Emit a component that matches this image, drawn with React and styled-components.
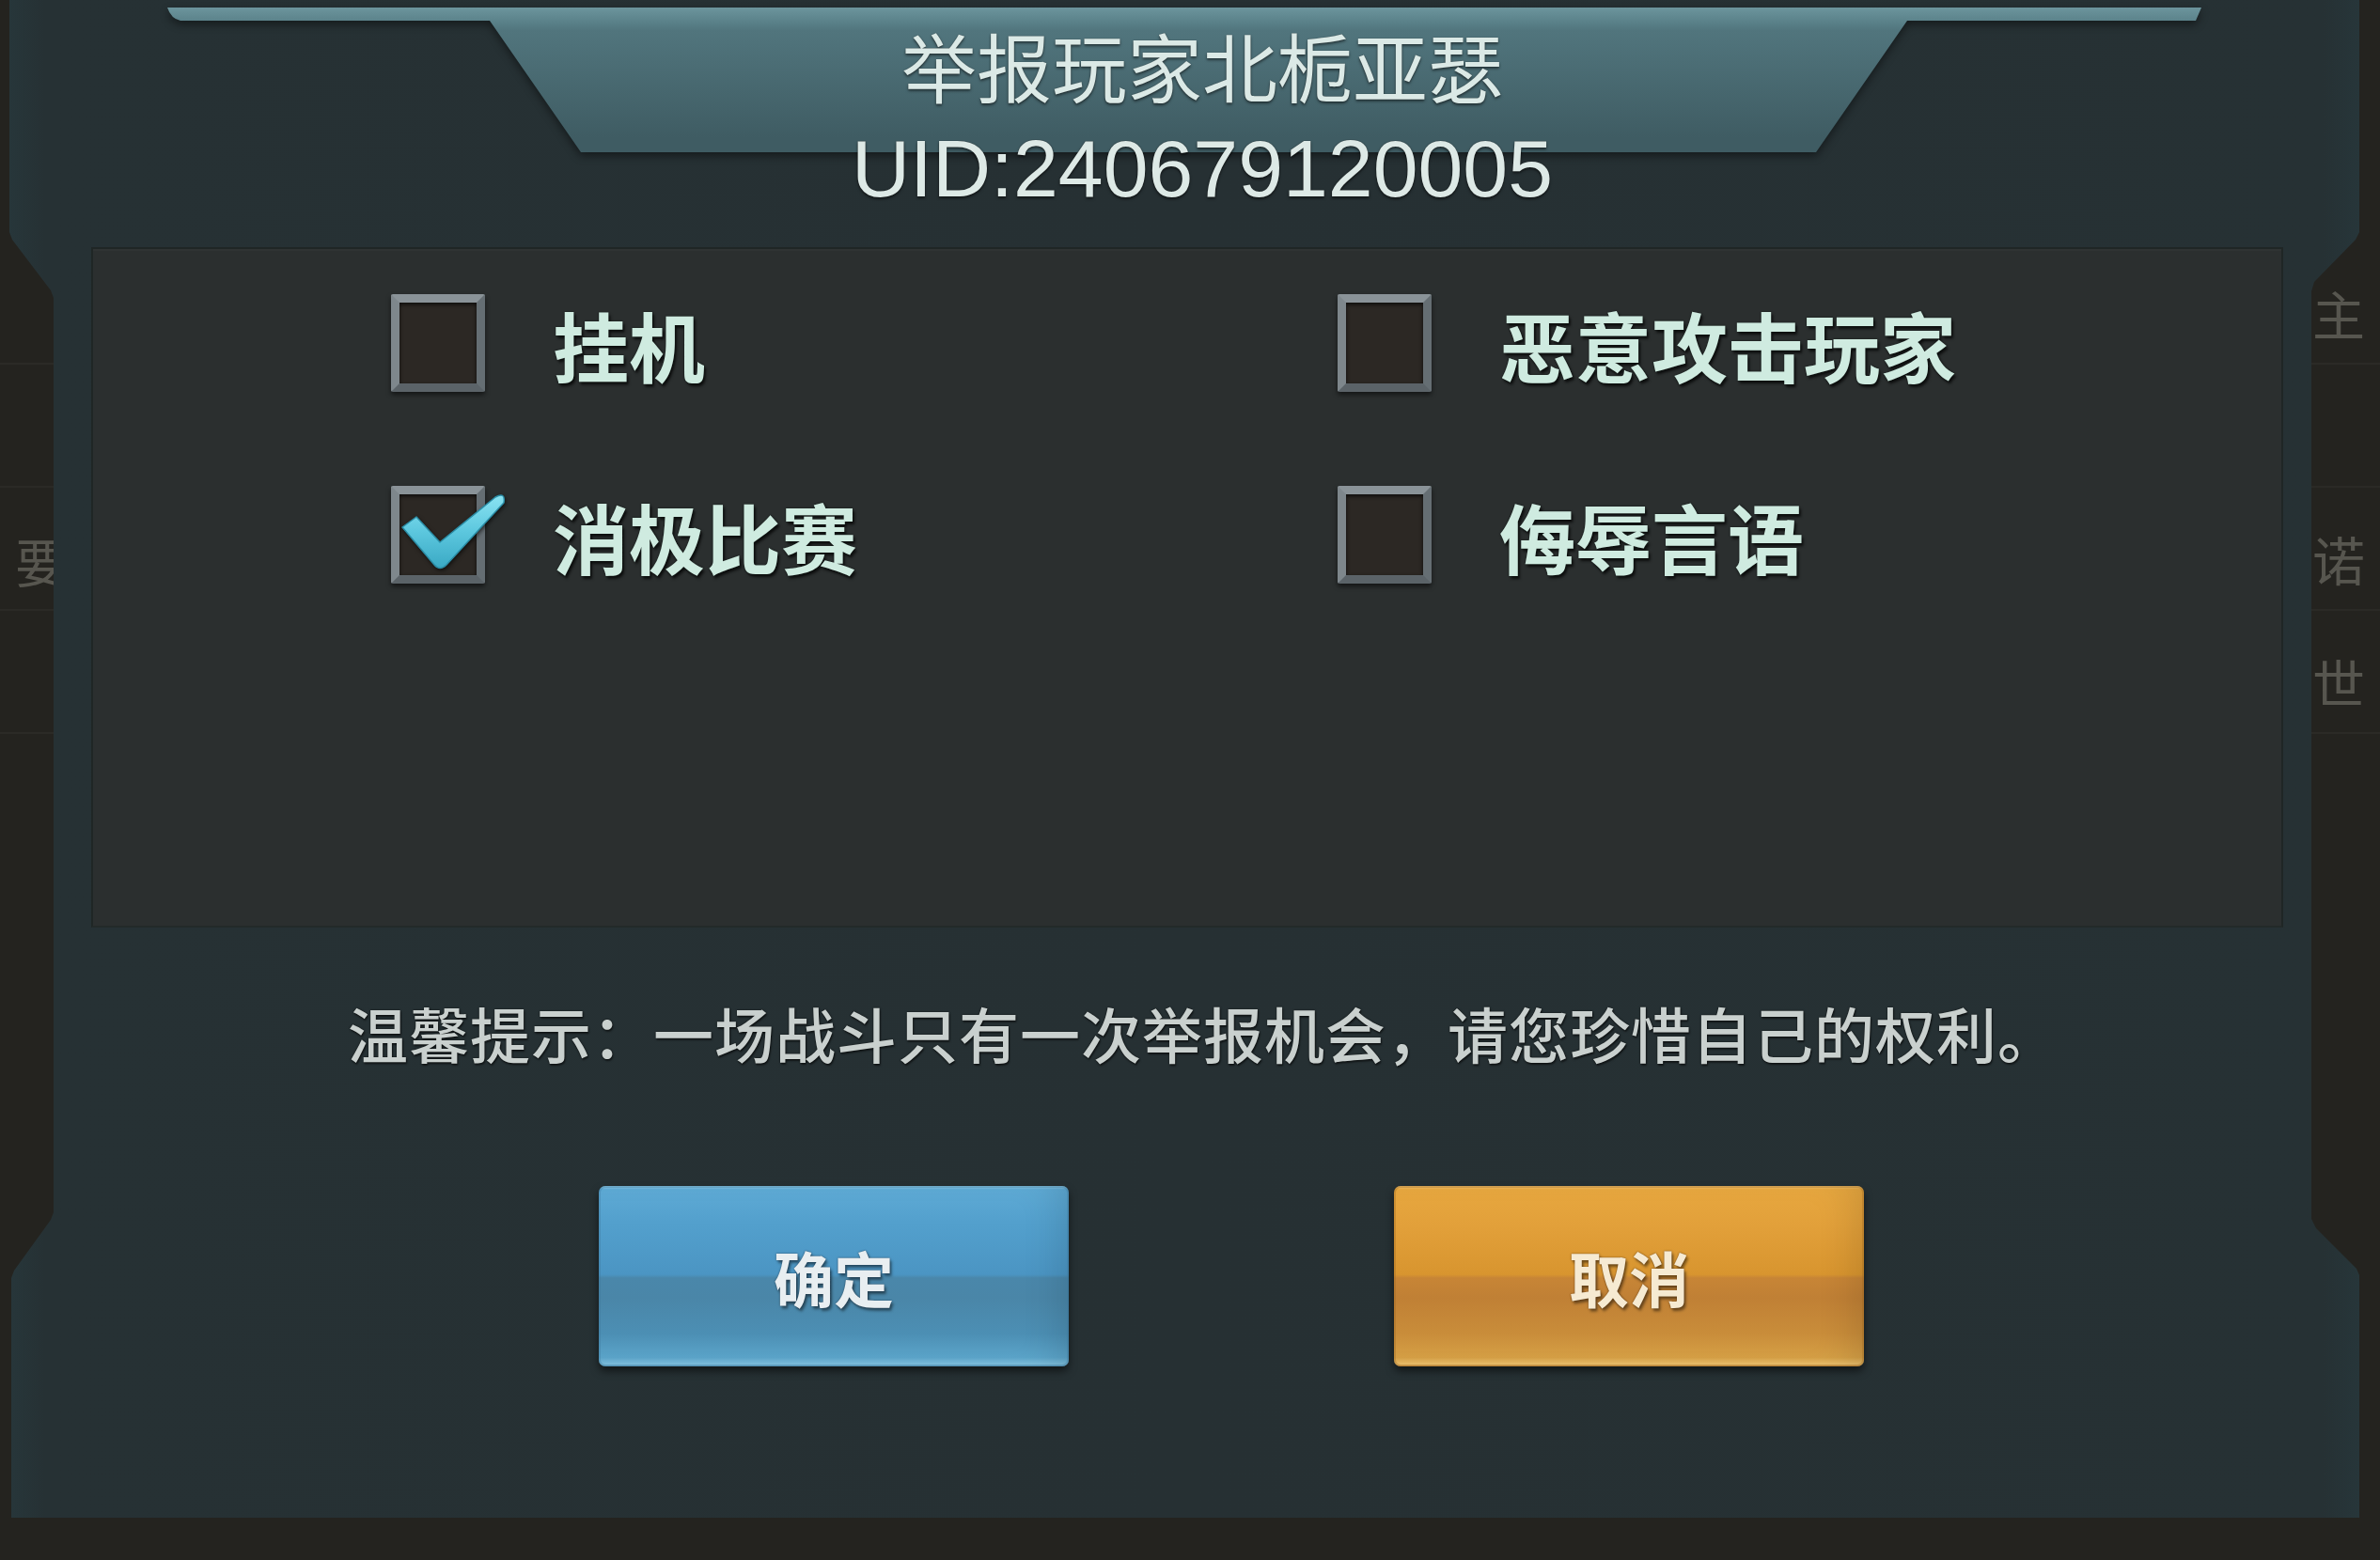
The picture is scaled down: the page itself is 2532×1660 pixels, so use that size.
import React from "react";
import styled, { createGlobalStyle } from "styled-components";

const GlobalStyle = createGlobalStyle`
  html, body { margin: 0; padding: 0; background: #24231f; overflow: hidden; }
  #root { width: 2532px; height: 1660px; }
`;

const CJK = `"Noto Sans CJK SC", "Noto Sans", sans-serif`;

const Page = styled.div`
  position: relative;
  width: 2532px;
  height: 1660px;
  box-sizing: border-box;
  padding: 0 22px 0 10px;
  background: #24231f;
  overflow: hidden;
  display: flex;
  flex-direction: column;
`;

/* background scene behind the dialog */
const Backdrop = styled.div`
  position: absolute;
  inset: 0;
  z-index: 0;
  display: flex;
  flex-direction: column;
  padding-top: 257px;
`;

const BackdropRow = styled.div`
  height: 129px;
  border-bottom: 2px solid rgba(255, 255, 255, 0.035);
`;

const SideColumn = styled.div`
  position: absolute;
  top: 0;
  ${(p) => (p.$side === "left" ? "left: 16px;" : "right: 16px;")}
  display: flex;
  flex-direction: column;
  padding-top: ${(p) => p.$top}px;
`;

const Ghost = styled.span`
  font-family: ${CJK};
  font-size: 56px;
  line-height: 56px;
  color: #57564f;
  margin-top: ${(p) => p.$mt || 0}px;
`;

const Panel = styled.div`
  position: relative;
  z-index: 1;
  width: 2500px;
  height: 1615px;
  flex: none;
  display: flex;
  flex-direction: column;
  background: linear-gradient(
    90deg,
    #27363a 0%,
    #263134 1.5%,
    #263033 50%,
    #263134 98.5%,
    #27363a 100%
  );
  clip-path: polygon(
    0 0,
    2500px 0,
    2500px 247px,
    2496px 255px,
    2452px 300px,
    2449px 310px,
    2449px 1297px,
    2454px 1307px,
    2497px 1350px,
    2500px 1357px,
    2500px 1615px,
    2px 1615px,
    2px 1360px,
    5px 1352px,
    44px 1298px,
    47px 1290px,
    47px 317px,
    44px 309px,
    3px 255px,
    0 247px
  );
`;

const Header = styled.div`
  position: relative;
  height: 263px;
  flex: none;
  box-sizing: border-box;
  padding: 28px 0 0 38px;
  display: flex;
  flex-direction: column;
  align-items: center;
`;

const BannerArt = styled.svg`
  position: absolute;
  top: 0;
  left: 0;
  width: 2500px;
  height: 180px;
  z-index: 0;
  filter: drop-shadow(0 4px 5px rgba(0, 0, 0, 0.45));
`;

const Title = styled.div`
  position: relative;
  z-index: 1;
  font-family: ${CJK};
  font-size: 80px;
  line-height: 80px;
  font-weight: 400;
  color: #dbe9e6;
  text-shadow: 0 2px 3px rgba(0, 0, 0, 0.5), 0 0 1px rgba(0, 0, 0, 0.6);
  white-space: nowrap;
`;

const Uid = styled.div`
  position: relative;
  z-index: 1;
  margin-top: 28px;
  font-family: "Liberation Sans", Arial, sans-serif;
  font-size: 86px;
  line-height: 86px;
  color: #dde9e6;
  text-shadow: 0 2px 3px rgba(0, 0, 0, 0.55), 0 0 1px rgba(0, 0, 0, 0.8);
  white-space: nowrap;
`;

const OptionsBox = styled.div`
  margin-left: 87px;
  width: 2332px;
  height: 724px;
  flex: none;
  box-sizing: border-box;
  padding: 48px 0 0 317px;
  background: #2b2f2f;
  border: 2px solid #1f2625;
  border-bottom-color: #232a29;
  box-shadow: inset 0 2px 0 rgba(255, 255, 255, 0.02);
`;

const OptionGrid = styled.div`
  display: grid;
  grid-template-columns: 1007px auto;
  row-gap: 100px;
`;

const Option = styled.label`
  display: flex;
  align-items: center;
  gap: 72px;
  height: 104px;
`;

const Box = styled.span`
  position: relative;
  flex: none;
  width: 100px;
  height: 104px;
  box-sizing: border-box;
  border: 9px solid #737c81;
  border-top-color: #8a9398;
  border-left-color: #7e878c;
  border-right-color: #656e73;
  border-bottom-color: #5b6368;
  border-radius: 2px;
  background: #2c2824;
  box-shadow: 0 3px 5px rgba(0, 0, 0, 0.55), inset 0 2px 4px rgba(0, 0, 0, 0.7);
`;

const Check = styled.svg`
  position: absolute;
  left: -9px;
  top: -9px;
  width: 130px;
  height: 100px;
  overflow: visible;
  filter: drop-shadow(1px 2px 2px rgba(0, 0, 0, 0.6));
`;

const Label = styled.span`
  font-family: ${CJK};
  font-size: 81px;
  line-height: 81px;
  font-weight: 700;
  color: #cfebe0;
  text-shadow: 0 0 2px #0d1412, 2px 3px 3px rgba(0, 0, 0, 0.7);
  white-space: nowrap;
`;

const Hint = styled.div`
  margin-top: 78px;
  padding-left: 40px;
  display: flex;
  justify-content: center;
  font-family: ${CJK};
  font-size: 64px;
  line-height: 66px;
  letter-spacing: 1px;
  font-weight: 500;
  color: #c9d0ce;
  text-shadow: 0 0 2px rgba(0, 0, 0, 0.7), 1px 2px 2px rgba(0, 0, 0, 0.5);
  white-space: nowrap;
`;

const ButtonRow = styled.div`
  margin-top: 131px;
  padding-left: 100px;
  display: flex;
  justify-content: center;
  gap: 346px;
`;

const palettes = {
  confirm: {
    bg: `linear-gradient(180deg,
      #93cfea 0%, #5eaad5 2%, #53a0cd 20%, #4b95c3 49%,
      #4a87aa 51%, #4a86a8 62%, #4c8fb4 82%, #5ba4c9 95%, #7fc0de 99%, #5c9fc2 100%)`,
    edge: "#3a7396",
    text: "#e8eef1",
    shadow: "rgba(20, 40, 60, 0.8)",
  },
  cancel: {
    bg: `linear-gradient(180deg,
      #f3c774 0%, #e7a73f 2%, #e2a03a 22%, #d8952f 49%,
      #c78536 51%, #c08035 62%, #c98d3a 82%, #d59f45 95%, #ecc06c 99%, #c88d3c 100%)`,
    edge: "#9a621f",
    text: "#f6ead2",
    shadow: "rgba(80, 45, 10, 0.85)",
  },
};

const ActionButton = styled.button`
  width: 500px;
  height: 192px;
  flex: none;
  border: none;
  border-radius: 7px;
  padding: 0;
  background: ${(p) => palettes[p.$variant].bg};
  box-shadow: 0 5px 9px rgba(0, 0, 0, 0.55), inset 0 0 0 2px ${(p) => palettes[p.$variant].edge}55,
    inset -30px 0 40px -20px rgba(0, 0, 0, 0.12);
  font-family: ${CJK};
  font-size: 64px;
  line-height: 64px;
  font-weight: 700;
  color: ${(p) => palettes[p.$variant].text};
  text-shadow: 0 0 2px ${(p) => palettes[p.$variant].shadow}, 2px 3px 3px rgba(0, 0, 0, 0.45);
  cursor: pointer;
`;

const options = [
  { label: "挂机", checked: false },
  { label: "恶意攻击玩家", checked: false },
  { label: "消极比赛", checked: true },
  { label: "侮辱言语", checked: false },
];

function CheckMark() {
  return (
    <Check viewBox="0 0 130 100">
      <defs>
        <linearGradient id="chk" x1="0" y1="0" x2="0" y2="1">
          <stop offset="0" stopColor="#8ae3f2" />
          <stop offset="0.5" stopColor="#5cc7de" />
          <stop offset="1" stopColor="#3aa9c4" />
        </linearGradient>
      </defs>
      <path
        d="M12 44 L27 33 L52 60 L111 12 Q122 6 120 18 L59 84 Q52 91 46 84 Z"
        fill="url(#chk)"
        stroke="#2b8da6"
        strokeWidth="1.5"
        strokeLinejoin="round"
      />
    </Check>
  );
}

export default function App() {
  return (
    <>
      <GlobalStyle />
      <Page>
        <Backdrop>
          {[0, 1, 2, 3].map((i) => (
            <BackdropRow key={i} />
          ))}
          <SideColumn $side="left" $top={568}>
            <Ghost>要</Ghost>
          </SideColumn>
          <SideColumn $side="right" $top={305}>
            <Ghost>主</Ghost>
            <Ghost $mt={205}>诺</Ghost>
            <Ghost $mt={75}>世</Ghost>
          </SideColumn>
        </Backdrop>
        <Panel>
          <Header>
            <BannerArt viewBox="0 0 2500 180" preserveAspectRatio="none">
              <defs>
                <linearGradient id="banner" x1="0" y1="0" x2="0" y2="1">
                  <stop offset="0" stopColor="#6c959d" />
                  <stop offset="0.1" stopColor="#5a8189" />
                  <stop offset="0.16" stopColor="#51757d" />
                  <stop offset="0.9" stopColor="#3f5c63" />
                </linearGradient>
              </defs>
              <path
                d="M168 8 L2332 8 L2326 22 L2019 22 L1922 162 L608 162 L511 22 L182 22 Q172 20 168 8 Z"
                fill="url(#banner)"
              />
            </BannerArt>
            <Title>举报玩家北栀亚瑟</Title>
            <Uid>UID:240679120005</Uid>
          </Header>
          <OptionsBox>
            <OptionGrid>
              {options.map((o) => (
                <Option key={o.label}>
                  <Box>{o.checked && <CheckMark />}</Box>
                  <Label>{o.label}</Label>
                </Option>
              ))}
            </OptionGrid>
          </OptionsBox>
          <Hint>温馨提示：一场战斗只有一次举报机会，请您珍惜自己的权利。</Hint>
          <ButtonRow>
            <ActionButton $variant="confirm">确定</ActionButton>
            <ActionButton $variant="cancel">取消</ActionButton>
          </ButtonRow>
        </Panel>
      </Page>
    </>
  );
}
